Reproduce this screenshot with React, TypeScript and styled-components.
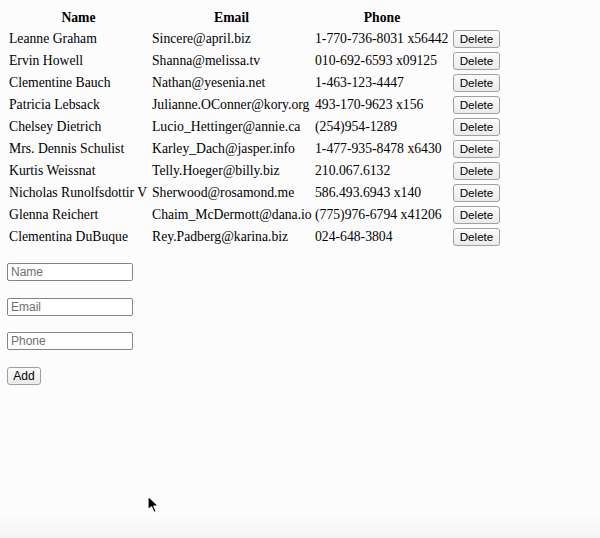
import React, { useState } from 'react';
import styled, { createGlobalStyle } from 'styled-components';

interface User {
  id: number;
  name: string;
  email: string;
  phone: string;
}

const initialUsers: User[] = [
  { id: 1, name: 'Leanne Graham', email: 'Sincere@april.biz', phone: '1-770-736-8031 x56442' },
  { id: 2, name: 'Ervin Howell', email: 'Shanna@melissa.tv', phone: '010-692-6593 x09125' },
  { id: 3, name: 'Clementine Bauch', email: 'Nathan@yesenia.net', phone: '1-463-123-4447' },
  { id: 4, name: 'Patricia Lebsack', email: 'Julianne.OConner@kory.org', phone: '493-170-9623 x156' },
  { id: 5, name: 'Chelsey Dietrich', email: 'Lucio_Hettinger@annie.ca', phone: '(254)954-1289' },
  { id: 6, name: 'Mrs. Dennis Schulist', email: 'Karley_Dach@jasper.info', phone: '1-477-935-8478 x6430' },
  { id: 7, name: 'Kurtis Weissnat', email: 'Telly.Hoeger@billy.biz', phone: '210.067.6132' },
  { id: 8, name: 'Nicholas Runolfsdottir V', email: 'Sherwood@rosamond.me', phone: '586.493.6943 x140' },
  { id: 9, name: 'Glenna Reichert', email: 'Chaim_McDermott@dana.io', phone: '(775)976-6794 x41206' },
  { id: 10, name: 'Clementina DuBuque', email: 'Rey.Padberg@karina.biz', phone: '024-648-3804' },
];

const GlobalStyle = createGlobalStyle`
  html, body {
    margin: 0;
    background: #fdfcfd;
  }
  body {
    font-family: "Liberation Serif", "Times New Roman", serif;
    color: #000;
  }
`;

const Page = styled.div`
  position: relative;
  min-height: 538px;
  padding: 7px 0 0 6px;
  box-sizing: border-box;
  background: linear-gradient(to bottom, #fdfcfd 0, #fdfcfd 512px, #f5f4f5 538px);
`;

const Table = styled.table`
  width: 497px;
  border-collapse: separate;
  border-spacing: 2px;
  table-layout: fixed;
  font-size: 13.7px;
`;

const HeadCell = styled.th<{ $w: number }>`
  width: ${p => p.$w}px;
  height: 18px;
  padding: 0 1px;
  font-weight: bold;
  text-align: center;
  white-space: nowrap;
  line-height: 18px;
`;

const Cell = styled.td`
  height: 20px;
  padding: 0 1px;
  white-space: nowrap;
  overflow: visible;
  line-height: 20px;
  vertical-align: middle;
`;

const NativeButton = styled.button`
  font-family: "Liberation Sans", Helvetica, Arial, sans-serif;
  font-size: 11.6px;
  color: #000;
  background: linear-gradient(#fbfbfb, #ebebeb);
  border: 1px solid #a0a0a0;
  border-radius: 3px;
  padding: 0;
  height: 18px;
  line-height: 16px;
  box-sizing: border-box;
  cursor: default;
`;

const DeleteButton = styled(NativeButton)`
  width: 47px;
  display: block;
`;

const Form = styled.form`
  display: flex;
  flex-direction: column;
  align-items: flex-start;
  gap: 16.5px;
  margin: 14px 0 0 1px;
`;

const Input = styled.input`
  width: 126px;
  height: 18px;
  box-sizing: border-box;
  border: 1px solid #858585;
  border-radius: 2px;
  padding: 0 3px;
  font-family: "Liberation Sans", Helvetica, Arial, sans-serif;
  font-size: 12px;
  background: #fff;
  &::placeholder {
    color: #6f6f6f;
  }
`;

const AddButton = styled(NativeButton)`
  width: 34px;
  font-size: 12px;
  margin-top: 0.5px;
`;

const Cursor = styled.svg`
  position: absolute;
  left: 146px;
  top: 495px;
`;

export default function App() {
  const [users, setUsers] = useState<User[]>(initialUsers);
  const [name, setName] = useState('');
  const [email, setEmail] = useState('');
  const [phone, setPhone] = useState('');

  const add = (e: React.FormEvent) => {
    e.preventDefault();
    setUsers(u => [...u, { id: Date.now(), name, email, phone }]);
    setName('');
    setEmail('');
    setPhone('');
  };

  return (
    <>
      <GlobalStyle />
      <Page>
        <Table>
          <thead>
            <tr>
              <HeadCell $w={139}>Name</HeadCell>
              <HeadCell $w={159}>Email</HeadCell>
              <HeadCell $w={134}>Phone</HeadCell>
              <HeadCell $w={47}></HeadCell>
            </tr>
          </thead>
          <tbody>
            {users.map(u => (
              <tr key={u.id}>
                <Cell>{u.name}</Cell>
                <Cell>{u.email}</Cell>
                <Cell>{u.phone}</Cell>
                <Cell>
                  <DeleteButton type="button" onClick={() => setUsers(list => list.filter(x => x.id !== u.id))}>
                    Delete
                  </DeleteButton>
                </Cell>
              </tr>
            ))}
          </tbody>
        </Table>
        <Form onSubmit={add}>
          <Input placeholder="Name" value={name} onChange={e => setName(e.target.value)} />
          <Input placeholder="Email" value={email} onChange={e => setEmail(e.target.value)} />
          <Input placeholder="Phone" value={phone} onChange={e => setPhone(e.target.value)} />
          <AddButton type="submit">Add</AddButton>
        </Form>
        <Cursor width="14" height="20" viewBox="0 0 14 20">
          <path d="M2 1 L2 15 L5.5 11.8 L8 17.5 L10.2 16.5 L7.8 11 L12.5 11 Z" fill="#000" stroke="#fff" strokeWidth="1.2" strokeLinejoin="round" />
        </Cursor>
      </Page>
    </>
  );
}
